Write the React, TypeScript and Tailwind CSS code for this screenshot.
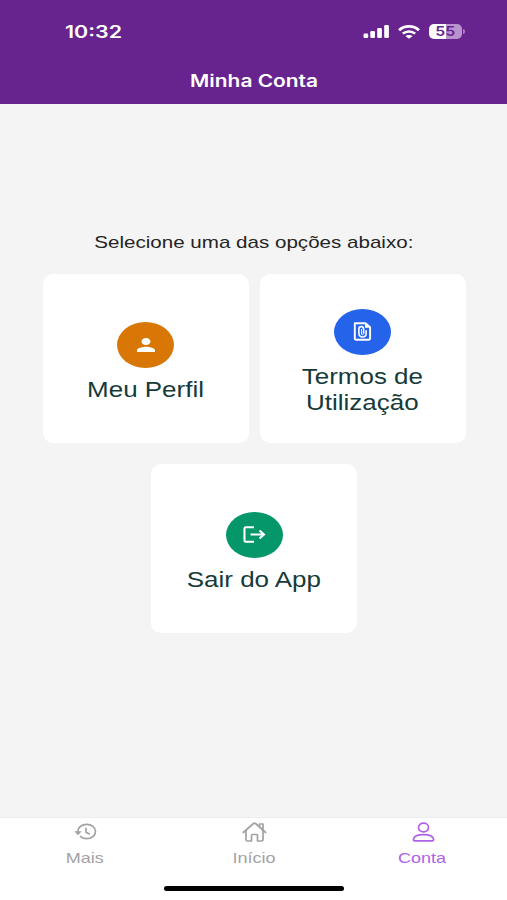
import React from "react";

const SignalIcon = () => (
  <svg width="27" height="15" viewBox="0 0 27 15" fill="currentColor">
    <rect x="0.5" y="9.5" width="4.7" height="4.5" rx="1.2" />
    <rect x="7.3" y="7" width="4.7" height="7" rx="1.2" />
    <rect x="14.2" y="4" width="4.7" height="10" rx="1.2" />
    <rect x="21.2" y="1" width="4.7" height="13" rx="1.2" />
  </svg>
);

const WifiIcon = () => (
  <svg width="22" height="14" viewBox="0 0 21 14" preserveAspectRatio="none" fill="none" stroke="currentColor">
    <path d="M1 5.2C6.3.1 14.7.1 20 5.2" strokeWidth="2.7" />
    <path d="M4.6 8.7c3.4-3.1 8.4-3.1 11.8 0" strokeWidth="2.5" />
    <path d="M10.5 13.8 7 11.1c1.8-1.6 5.2-1.6 7 0z" fill="currentColor" stroke="none" />
  </svg>
);

const PersonIcon = () => (
  <svg width="18" height="14" viewBox="4 4 16 16" preserveAspectRatio="none" fill="currentColor">
    <path d="M12 12c2.21 0 4-1.79 4-4s-1.79-4-4-4-4 1.79-4 4 1.79 4 4 4zm0 2c-2.67 0-8 1.34-8 4v2h16v-2c0-2.66-5.33-4-8-4z" />
  </svg>
);

const TermsIcon = () => (
  <svg width="19" height="19" viewBox="0 0 19 19" fill="none" stroke="currentColor" strokeWidth="1.9">
    <path d="M1.8 1.3h10.7l4.6 4v11.2q0 1.2-1.2 1.2H3q-1.2 0-1.2-1.2z" strokeLinejoin="round" />
    <path d="M12 1.5v4.3h5z" fill="currentColor" stroke="none" />
    <path d="M13.1 8.3v3.4c0 4.3-7.2 4.3-7.2 0V6.7c0-2.8 4.7-2.8 4.7 0v5" strokeWidth="1.6" />
    <path d="M8.5 7v5.2q1 1 2 0" strokeWidth="1" />
  </svg>
);

const ExitIcon = () => (
  <svg width="23" height="17" viewBox="0 0 23 17" fill="none" stroke="currentColor" strokeWidth="2.1">
    <path d="M11 1.3H2.8q-1.3 0-1.3 1.1v12q0 1.3 1.3 1.3H11" />
    <path d="M7.5 8.5H21M16.5 4.5l4.5 4-4.5 4" />
  </svg>
);

const HistoryIcon = () => (
  <svg width="23" height="17" viewBox="0 0 23 17" fill="none" stroke="currentColor" strokeWidth="1.7">
    <path d="M4 9.8V8C4 4.2 7.8 1.3 12.7 1.3S21.5 4.4 21.5 8.500s-4 7.200-8.800 7.200c-2.800 0-5-.9-6.600-2.500" />
    <path d="M.4 8.300h7.400L4 12.200z" fill="currentColor" stroke="none" />
    <path d="M12 4.800v4.400l3.800 2" />
  </svg>
);

const HomeIcon = () => (
  <svg width="25" height="20" viewBox="0 0 25 20" fill="none" stroke="currentColor" strokeWidth="1.7" strokeLinejoin="round" strokeLinecap="round">
    <path d="m1.300 10.500 10.200-9q1-.8 2 0l10.200 9" />
    <path d="M4 8.700v9q0 1.300 1.300 1.300h4.200v-5.500q0-1 1-1h4q1 0 1 1V19h4.200q1.300 0 1.300-1.300v-9" />
    <path d="M17.500 4.600V2h3.500v5.700" />
  </svg>
);

const AccountIcon = () => (
  <svg width="23" height="20" viewBox="0 0 23 20" fill="none" stroke="currentColor" strokeWidth="1.7" strokeLinejoin="round">
    <ellipse cx="11.500" cy="5.500" rx="5" ry="4.300" />
    <path d="M1.400 17.200c1.200-6.200 19-6.200 20.200 0q.1 1.600-1.500 1.600H2.900q-1.600 0-1.500-1.600z" />
  </svg>
);

type CardProps = {
  icon: React.ReactNode;
  color: string;
  children: React.ReactNode;
};

const Card = ({ icon, color, children }: CardProps) => (
  <button className="flex h-[169px] w-[206px] flex-col items-center justify-center rounded-[10px] bg-white pt-[7px]">
    <span className={`flex h-[46px] w-[57px] shrink-0 items-center justify-center rounded-[50%] text-white ${color}`}>
      {icon}
    </span>
    <span className="mt-[9px] scale-x-[1.18] text-[22px] leading-[26px] whitespace-nowrap text-[#163a3a]">
      {children}
    </span>
  </button>
);

type TabProps = {
  icon: React.ReactNode;
  label: string;
  active?: boolean;
};

const Tab = ({ icon, label, active }: TabProps) => (
  <button className={`flex flex-1 flex-col items-center ${active ? "text-[#ad62e8]" : "text-[#a2a2a6]"}`}>
    <span className="flex h-[27px] items-center justify-center pl-px">{icon}</span>
    <span className="mt-[4px] scale-x-[1.2] text-[15px] leading-[18px]">{label}</span>
  </button>
);

export default function App() {
  return (
    <div className="flex h-[900px] w-[507px] flex-col overflow-hidden bg-[#f4f4f4] font-['Liberation_Sans',sans-serif]">
      <header className="h-[104px] shrink-0 bg-[#67238e] font-['Inter',sans-serif] text-white">
        <div className="flex h-[63px] items-center pr-[42px] pl-[65px]">
          <span className="origin-left scale-x-[1.26] text-[17px] leading-[22px] font-semibold">10:32</span>
          <div className="ml-auto flex items-center">
            <SignalIcon />
            <span className="ml-[8px]">
              <WifiIcon />
            </span>
            <div className="ml-[9px] flex h-[15px] w-[33px] items-center justify-center rounded-[5px] bg-linear-to-r from-white from-52% to-[#b993cd] to-52% text-[#67238e]">
              <span className="scale-x-[1.22] text-[13px] leading-none font-semibold">55</span>
            </div>
            <span className="ml-px h-[5px] w-[2px] rounded-r-full bg-[#a77bc0]" />
          </div>
        </div>
        <h1 className="flex h-[38px] items-center justify-center pl-[2px] text-[17px] font-semibold">
          <span className="scale-x-[1.23]">Minha Conta</span>
        </h1>
      </header>

      <main className="flex flex-1 flex-col items-center pt-[128px]">
        <p className="mb-[20px] scale-x-[1.21] text-[17px] leading-[22px] whitespace-nowrap text-[#252525]">
          Selecione uma das opções abaixo:
        </p>
        <div className="flex flex-wrap justify-center gap-x-[11px] gap-y-[21px] pl-px">
          <Card icon={<PersonIcon />} color="bg-[#d97706]">
            Meu Perfil
          </Card>
          <Card icon={<TermsIcon />} color="bg-[#2563eb]">
            Termos de
            <br />
            Utilização
          </Card>
          <Card icon={<ExitIcon />} color="bg-[#059669]">
            Sair do App
          </Card>
        </div>
      </main>

      <footer className="h-[83px] shrink-0 border-t border-[#ededed] bg-white">
        <nav className="flex">
          <Tab icon={<HistoryIcon />} label="Mais" />
          <Tab icon={<HomeIcon />} label="Início" />
          <Tab icon={<AccountIcon />} label="Conta" active />
        </nav>
        <div className="mx-auto mt-[19px] h-[5px] w-[180px] rounded-full bg-black" />
      </footer>
    </div>
  );
}
